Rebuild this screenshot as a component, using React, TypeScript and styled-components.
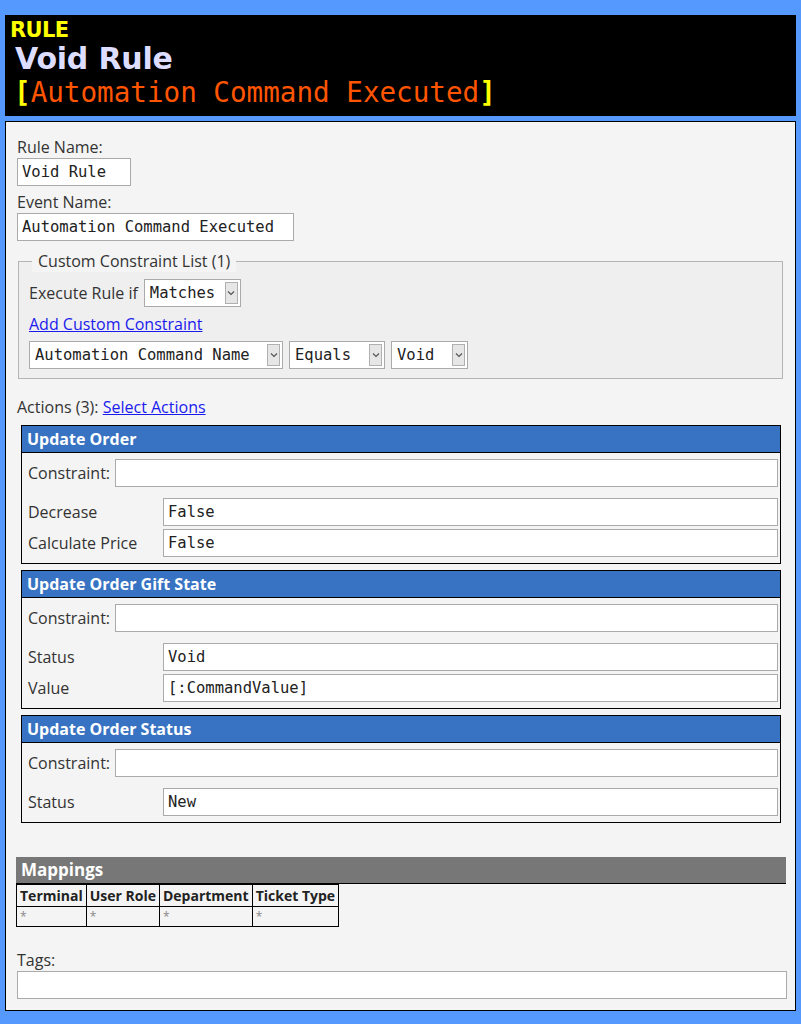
import styled, { createGlobalStyle } from "styled-components";

const GlobalStyle = createGlobalStyle`
  body {
    margin: 0;
    background: #5599ff;
    font-family: "Open Sans", "Noto Sans", sans-serif;
    color: #333;
  }
`;

const mono = `"DejaVu Sans Mono", "Liberation Mono", monospace`;

type Param = { name: string; value: string };
type Action = { title: string; params: Param[] };

const actions: Action[] = [
  {
    title: "Update Order",
    params: [
      { name: "Decrease", value: "False" },
      { name: "Calculate Price", value: "False" },
    ],
  },
  {
    title: "Update Order Gift State",
    params: [
      { name: "Status", value: "Void" },
      { name: "Value", value: "[:CommandValue]" },
    ],
  },
  {
    title: "Update Order Status",
    params: [{ name: "Status", value: "New" }],
  },
];

const mappingCols = ["Terminal", "User Role", "Department", "Ticket Type"];

const Chevron = () => (
  <svg width="8" height="6" viewBox="0 0 8 6">
    <polyline points="1,1.5 4,4.5 7,1.5" fill="none" stroke="#555" strokeWidth="1.2" />
  </svg>
);

const Select = ({ value, width }: { value: string; width: number }) => (
  <Dropdown $width={width}>
    <DropdownValue>{value}</DropdownValue>
    <DropdownArrow>
      <Chevron />
    </DropdownArrow>
  </Dropdown>
);

export default function App() {
  return (
    <>
      <GlobalStyle />
      <Page>
        <Banner>
          <BannerKind>RULE</BannerKind>
          <BannerTitle>Void Rule</BannerTitle>
          <BannerEvent>
            <Bracket>[</Bracket>Automation Command Executed<Bracket>]</Bracket>
          </BannerEvent>
        </Banner>

        <Panel>
          <FieldLabel>Rule Name:</FieldLabel>
          <TextBox $width={114}>Void Rule</TextBox>
          <FieldLabel $top={5}>Event Name:</FieldLabel>
          <TextBox $width={277}>Automation Command Executed</TextBox>

          <ConstraintSet>
            <Legend>Custom Constraint List (1)</Legend>
            <InlineRow $gap={6}>
              <span>Execute Rule if</span>
              <Select value="Matches" width={97} />
            </InlineRow>
            <LinkText>Add Custom Constraint</LinkText>
            <InlineRow $gap={6}>
              <Select value="Automation Command Name" width={254} />
              <Select value="Equals" width={96} />
              <Select value="Void" width={77} />
            </InlineRow>
          </ConstraintSet>

          <ActionsLine>
            Actions (3): <LinkText as="span">Select Actions</LinkText>
          </ActionsLine>

          <ActionList>
            {actions.map((a) => (
              <ActionCard key={a.title}>
                <ActionHeader>{a.title}</ActionHeader>
                <ActionBody>
                  <ConstraintRow>
                    <span>Constraint:</span>
                    <WideBox />
                  </ConstraintRow>
                  <ParamGrid>
                    {a.params.map((p) => (
                      <ParamRow key={p.name}>
                        <span>{p.name}</span>
                        <WideBox>{p.value}</WideBox>
                      </ParamRow>
                    ))}
                  </ParamGrid>
                </ActionBody>
              </ActionCard>
            ))}
          </ActionList>

          <MappingsBar>Mappings</MappingsBar>
          <MappingTable>
            <thead>
              <tr>
                {mappingCols.map((c) => (
                  <HeadCell key={c}>{c}</HeadCell>
                ))}
              </tr>
            </thead>
            <tbody>
              <tr>
                {mappingCols.map((c) => (
                  <DataCell key={c}>*</DataCell>
                ))}
              </tr>
            </tbody>
          </MappingTable>

          <FieldLabel $top={22}>Tags:</FieldLabel>
          <TagsBox />
        </Panel>
      </Page>
    </>
  );
}

const Page = styled.div`
  padding: 15px 5px 14px 5px;
  display: flex;
  flex-direction: column;
  gap: 5px;
`;

const Banner = styled.div`
  background: #000;
  padding: 3px 5px 6px 5px;
  display: flex;
  flex-direction: column;
`;

const BannerKind = styled.div`
  font-family: "DejaVu Sans", Verdana, sans-serif;
  font-weight: bold;
  font-size: 21px;
  line-height: 24px;
  color: #ffff00;
  letter-spacing: -0.6px;
`;

const BannerTitle = styled.div`
  font-family: "DejaVu Sans", Verdana, sans-serif;
  font-weight: bold;
  font-size: 30px;
  line-height: 34px;
  color: #ddddff;
  margin-left: 5px;
  letter-spacing: -0.2px;
`;

const BannerEvent = styled.div`
  font-family: ${mono};
  font-size: 27.6px;
  line-height: 34px;
  color: #ff5500;
  margin-left: 4px;
`;

const Bracket = styled.span`
  color: #ffff00;
  font-weight: bold;
`;

const Panel = styled.div`
  background: #f4f4f4;
  border: 1px solid #000;
  padding: 14px 9px 11px 10px;
  display: flex;
  flex-direction: column;
  align-items: flex-start;
  font-size: 16px;
  line-height: 22px;
`;

const FieldLabel = styled.div<{ $top?: number }>`
  margin-top: ${(p) => p.$top ?? 0}px;
  margin-left: 1px;
`;

const TextBox = styled.div<{ $width?: number }>`
  box-sizing: border-box;
  width: ${(p) => (p.$width ? `${p.$width}px` : "100%")};
  height: 28px;
  margin-left: 1px;
  background: #fff;
  border: 1px solid #aaa;
  padding: 0 4px;
  font-family: ${mono};
  font-size: 15.5px;
  line-height: 26px;
  color: #222;
  white-space: nowrap;
`;

const ConstraintSet = styled.fieldset`
  box-sizing: border-box;
  align-self: stretch;
  margin: 9px 3px 0 2px;
  padding: 7px 10px 9px 10px;
  border: 1px solid #b4b4b4;
  background: #efefef;
  display: flex;
  flex-direction: column;
  align-items: flex-start;
  gap: 6px;
`;

const Legend = styled.legend`
  background: #f4f4f4;
  padding: 0 6px 0 6px;
  margin-left: 3px;
  font-size: 16px;
`;

const InlineRow = styled.div<{ $gap?: number }>`
  display: flex;
  align-items: center;
  gap: ${(p) => p.$gap ?? 2}px;
`;

const Dropdown = styled.div<{ $width: number }>`
  box-sizing: border-box;
  width: ${(p) => p.$width}px;
  height: 28px;
  background: #fff;
  border: 1px solid #aaa;
  display: flex;
  align-items: center;
  justify-content: space-between;
  padding: 0 2px 0 5px;
`;

const DropdownValue = styled.span`
  font-family: ${mono};
  font-size: 15.5px;
  color: #222;
  white-space: nowrap;
`;

const DropdownArrow = styled.span`
  box-sizing: border-box;
  width: 13px;
  height: 22px;
  background: #e6e6e6;
  border: 1px solid #b0b0b0;
  display: flex;
  align-items: center;
  justify-content: center;
`;

const LinkText = styled.a`
  color: #1a1aee;
  text-decoration: underline;
  cursor: pointer;
`;

const ActionsLine = styled.div`
  margin-top: 17px;
  margin-left: 1px;
`;

const ActionList = styled.div`
  align-self: stretch;
  margin: 7px 5px 0 5px;
  display: flex;
  flex-direction: column;
  gap: 6px;
`;

const ActionCard = styled.div`
  border: 1px solid #000;
`;

const ActionHeader = styled.div`
  background: #3873c3;
  color: #fff;
  font-weight: bold;
  font-size: 16px;
  line-height: 26px;
  padding: 0 5px;
  border-bottom: 1px solid #000;
`;

const ActionBody = styled.div`
  padding: 6px 2px 6px 6px;
  display: flex;
  flex-direction: column;
  gap: 11px;
`;

const ConstraintRow = styled.div`
  display: flex;
  align-items: center;
  gap: 5px;
`;

const ParamGrid = styled.div`
  display: flex;
  flex-direction: column;
  gap: 3px;
`;

const ParamRow = styled.div`
  display: grid;
  grid-template-columns: 135px 1fr;
  align-items: center;
`;

const WideBox = styled(TextBox)`
  flex: 1;
  margin-left: 0;
`;

const MappingsBar = styled.div`
  align-self: stretch;
  margin-top: 34px;
  background: #777;
  color: #fff;
  font-weight: bold;
  font-size: 17px;
  line-height: 26px;
  padding: 0 5px;
  border-bottom: 1px solid #000;
`;

const MappingTable = styled.table`
  border-collapse: collapse;
  font-size: 14px;
`;

const HeadCell = styled.th`
  border: 1px solid #000;
  padding: 0 3px;
  text-align: left;
  font-weight: bold;
  color: #222;
  line-height: 21px;
  white-space: nowrap;
`;

const DataCell = styled.td`
  border: 1px solid #000;
  padding: 0 3px;
  color: #888;
  font-size: 12px;
  line-height: 19px;
`;

const TagsBox = styled(TextBox)`
  width: 770px;
`;
